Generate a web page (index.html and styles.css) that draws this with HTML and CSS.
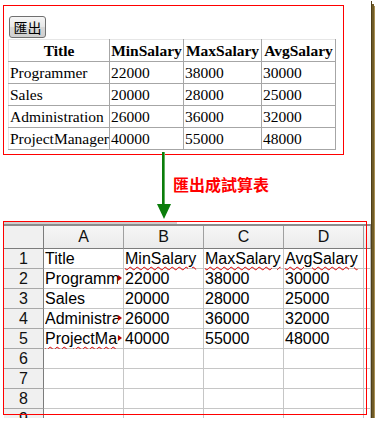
FILE: index.html
```html
<!DOCTYPE html>
<html lang="zh-Hant">
<head>
<meta charset="utf-8">
<title>匯出成試算表</title>
<link rel="stylesheet" href="styles.css">
</head>
<body>
<div class="frame">
  <section class="export-box">
    <button class="export-btn" type="button">匯出</button>
    <table class="salary">
      <colgroup><col class="c1"><col class="c2"><col class="c3"><col class="c4"></colgroup>
      <thead>
        <tr><th>Title</th><th>MinSalary</th><th>MaxSalary</th><th>AvgSalary</th></tr>
      </thead>
      <tbody>
        <tr><td>Programmer</td><td>22000</td><td>38000</td><td>30000</td></tr>
        <tr><td>Sales</td><td>20000</td><td>28000</td><td>25000</td></tr>
        <tr><td>Administration</td><td>26000</td><td>36000</td><td>32000</td></tr>
        <tr><td>ProjectManager</td><td>40000</td><td>55000</td><td>48000</td></tr>
      </tbody>
    </table>
  </section>

  <div class="arrow-row">
    <svg class="arrow" width="14" height="67" viewBox="0 0 14 67" aria-hidden="true">
      <rect x="5" y="0" width="3" height="53" fill="#0b7d0b"/>
      <rect x="7" y="0" width="1" height="53" fill="#5fb05f"/>
      <polygon points="0,52 14,52 7,67" fill="#0b7d0b"/>
    </svg>
    <span class="caption">匯出成試算表</span>
  </div>

  <section class="sheet-wrap">
    <div class="sheet-topbar"></div>
    <div class="sheet">
      <div class="hd corner"></div><div class="hd">A</div><div class="hd">B</div><div class="hd">C</div><div class="hd">D</div><div class="hd"></div>

      <div class="rh">1</div><div class="cell">Title</div><div class="cell"><span class="spell">MinSalary</span></div><div class="cell"><span class="spell">MaxSalary</span></div><div class="cell"><span class="spell">AvgSalary</span></div><div class="cell"></div>

      <div class="rh">2</div><div class="cell clip"><span class="clip-text">Programmer</span><i class="more"></i></div><div class="cell">22000</div><div class="cell">38000</div><div class="cell">30000</div><div class="cell"></div>

      <div class="rh">3</div><div class="cell">Sales</div><div class="cell">20000</div><div class="cell">28000</div><div class="cell">25000</div><div class="cell"></div>

      <div class="rh">4</div><div class="cell clip"><span class="clip-text">Administration</span><i class="more"></i></div><div class="cell">26000</div><div class="cell">36000</div><div class="cell">32000</div><div class="cell"></div>

      <div class="rh">5</div><div class="cell clip"><span class="clip-text"><span class="spell">ProjectManager</span></span><i class="more"></i></div><div class="cell">40000</div><div class="cell">55000</div><div class="cell">48000</div><div class="cell"></div>

      <div class="rh">6</div><div class="cell"></div><div class="cell"></div><div class="cell"></div><div class="cell"></div><div class="cell"></div>
      <div class="rh">7</div><div class="cell"></div><div class="cell"></div><div class="cell"></div><div class="cell"></div><div class="cell"></div>
      <div class="rh">8</div><div class="cell"></div><div class="cell"></div><div class="cell"></div><div class="cell"></div><div class="cell"></div>
      <div class="rh">9</div><div class="cell"></div><div class="cell"></div><div class="cell"></div><div class="cell"></div><div class="cell"></div>
    </div>
    <div class="sheet-outline"></div>
  </section>
</div>
</body>
</html>
```

FILE: styles.css
```css
* { box-sizing: border-box; }

html, body {
  margin: 0;
  padding: 0;
  background: #ffffff;
}

.frame {
  position: relative;
  width: 371px;
  height: 418px;
  overflow: hidden;
  background: #ffffff;
  box-shadow: 1px 1px 0 #4e3f18, 3px 4px 0 #6f5b28, 4px 6px 0 #a88f52;
}

/* ---------- top HTML page ---------- */
.export-box {
  margin: 5px 0 0 3px;
  width: 341px;
  height: 150px;
  border: 1px solid #ff0000;
  padding: 10px 0 0 4px;
}

.export-btn {
  display: block;
  margin: 0 0 1px 1px;
  width: 37px;
  height: 22px;
  padding: 0;
  font-family: "Noto Sans CJK TC", "Noto Sans CJK SC", sans-serif;
  font-size: 14px;
  line-height: 18px;
  color: #000;
  border: 1px solid #707070;
  border-radius: 3px;
  background: linear-gradient(#f6f6f6 0%, #e8e8e8 48%, #d8d8d8 52%, #cfcfcf 100%);
}

.salary {
  border-collapse: collapse;
  table-layout: fixed;
  width: 327px;
  font-family: "Liberation Serif", "Times New Roman", serif;
  font-size: 15.5px;
  color: #000;
}

.salary .c1 { width: 101px; }
.salary .c2 { width: 74px; }
.salary .c3 { width: 78px; }
.salary .c4 { width: 74px; }

.salary th,
.salary td {
  height: 22px;
  padding: 0 1px;
  border: 1px solid #a6a6a6;
  white-space: nowrap;
  overflow: visible;
  text-align: left;
  line-height: 20px;
}

.salary th {
  font-weight: bold;
  text-align: center;
  border-top-color: #e6e6e6;
}

.salary th:first-child,
.salary td:first-child {
  border-left-color: #e6e6e6;
}

/* ---------- arrow + caption ---------- */
.arrow-row {
  display: flex;
  align-items: flex-start;
  height: 66px;
  margin-left: 157px;
}

.arrow {
  display: block;
  flex: none;
  margin-top: -3px;
}

.caption {
  margin: 19px 0 0 2px;
  font-family: "Noto Sans CJK TC", "Noto Sans CJK SC", sans-serif;
  font-size: 16px;
  font-weight: bold;
  line-height: 20px;
  color: #ff0000;
}

/* ---------- spreadsheet ---------- */
.sheet-wrap {
  position: relative;
  height: 198px;
  padding-top: 1px;
  overflow: hidden;
}

.sheet-topbar {
  margin-left: 4px;
  width: 173px;
  height: 2px;
  background: #cfcfcf;
}

.sheet {
  margin-left: 4px;
  display: grid;
  grid-template-columns: 40px 80px 80px 80px 80px 1fr;
  grid-template-rows: 23px;
  grid-auto-rows: 20px;
  border-top: 2px solid #8c8c8c;
  font-family: "Liberation Sans", Arial, sans-serif;
  font-size: 16px;
  line-height: 19px;
  color: #000;
}

.hd {
  border-right: 1px solid #a0a0a0;
  border-bottom: 1px solid #7c7c7c;
  background: linear-gradient(#f6f6f6, #ebebeb);
  text-align: center;
  line-height: 21px;
  color: #111;
}

.hd.corner {
  border-right-color: #7c7c7c;
  background: #f0f0f0;
}

.rh {
  border-right: 1px solid #7c7c7c;
  border-bottom: 1px solid #a8a8a8;
  background: #f0f0f0;
  text-align: center;
  color: #111;
}

.cell {
  border-right: 1px solid #c6c6c6;
  border-bottom: 1px solid #c6c6c6;
  padding-left: 1px;
  white-space: nowrap;
}

.cell.clip {
  display: flex;
  align-items: flex-start;
}

.clip-text {
  flex: 1 1 auto;
  min-width: 0;
  overflow: hidden;
  padding-bottom: 1px;
}

.spell {
  text-decoration: underline wavy #e00000;
  text-decoration-thickness: 1px;
  text-underline-offset: 2px;
}

.more {
  flex: none;
  width: 0;
  height: 0;
  margin: 6px 1px 0 0;
  border-top: 3px solid transparent;
  border-bottom: 3px solid transparent;
  border-left: 4px solid #b00000;
}

.sheet-outline {
  position: absolute;
  left: 3px;
  top: 0;
  width: 364px;
  height: 194px;
  border: 1px solid #ff0000;
  pointer-events: none;
}
```
